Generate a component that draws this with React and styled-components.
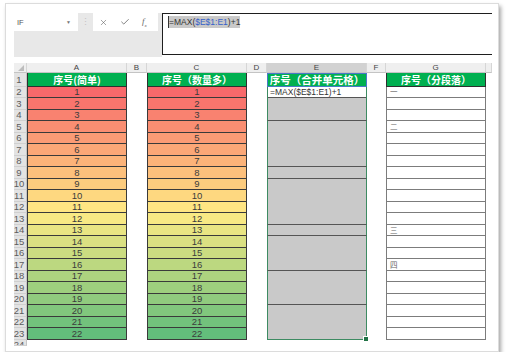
import React from "react";
import styled, { createGlobalStyle } from "styled-components";
import { X, Check } from "lucide-react";

const GlobalStyle = createGlobalStyle`
  body {
    margin: 0;
    background: #fff;
    font-family: "Liberation Sans", Arial, sans-serif;
  }
`;

const CJK = `"Noto Sans CJK SC", "Noto Sans", sans-serif`;

const Card = styled.div`
  box-sizing: border-box;
  width: 494px;
  height: 349px;
  margin: 3px 0 0 5px;
  background: #fff;
  border: 1px solid #dcdcdc;
  box-shadow: 2px 3px 4px rgba(0, 0, 0, 0.35);
  padding: 9px 0 0 8px;
  display: flex;
  flex-direction: column;
  gap: 6px;
  overflow: hidden;
`;

const Toolbar = styled.div`
  display: flex;
  align-items: flex-start;
  height: 44px;
`;

const ToolPanel = styled.div`
  width: 148px;
  height: 44px;
  background: #e8e8e8;
  display: flex;
  align-items: flex-start;
`;

const NameBox = styled.div`
  box-sizing: border-box;
  width: 64px;
  height: 18px;
  background: #fff;
  display: flex;
  align-items: center;
  padding: 0 7px 0 3px;
  font-size: 7.5px;
  color: #555;
  span:last-child {
    margin-left: auto;
    font-size: 5px;
    color: #777;
  }
`;

const Dots = styled.div`
  width: 15px;
  height: 18px;
  display: flex;
  align-items: center;
  justify-content: center;
  color: #c4c4c4;
  font-size: 9px;
`;

const FnBox = styled.div`
  box-sizing: border-box;
  width: 65px;
  height: 18px;
  background: #fff;
  display: flex;
  align-items: center;
  gap: 12px;
  padding-left: 6px;
  color: #555;
`;

const Fx = styled.span`
  font-family: "Liberation Serif", serif;
  font-style: italic;
  font-size: 9px;
  color: #666;
  sub {
    font-size: 5px;
  }
`;

const FormulaBox = styled.div`
  box-sizing: border-box;
  width: 330px;
  height: 42px;
  border: 1.5px solid #1e1e1e;
  border-right: none;
  padding: 3px 5px;
  font-size: 8.5px;
  color: #333;
`;

const Selected = styled.span`
  background: #c9c9c9;
  padding: 1px 0;
  border-left: 1px solid #333;
`;

const Ref = styled.span`
  color: #3560c8;
`;

const Sheet = styled.div`
  display: grid;
  grid-template-columns: 13px 100px 20px 100px 20px 100px 19px 100px 6px;
  grid-template-rows: 10px 13.5px repeat(22, 11.5px) 6px;
`;

const Corner = styled.div`
  background: #efefef;
  border-right: 1px solid #d6d6d6;
  border-bottom: 1px solid #c4c4c4;
  display: flex;
  align-items: flex-end;
  justify-content: flex-end;
  padding: 0 2px 1px 0;
`;

const ColHead = styled.div`
  box-sizing: border-box;
  background: ${(p) => (p.$active ? "#d2d2d2" : "#efefef")};
  color: #444;
  font-size: 8px;
  display: flex;
  align-items: center;
  justify-content: center;
  border-right: 1px solid #d6d6d6;
  border-bottom: 1px solid #c4c4c4;
`;

const RowHead = styled.div`
  box-sizing: border-box;
  background: #e3e3e3;
  color: #5c5c5c;
  font-size: 9.5px;
  display: flex;
  align-items: ${(p) => (p.$clip ? "flex-start" : "center")};
  justify-content: center;
  padding-right: 2px;
  border-right: 1px solid #c4c4c4;
  border-bottom: 1px solid #d0d0d0;
  overflow: hidden;
  line-height: 1;
`;

const Empty = styled.div``;

const Title = styled.div`
  box-sizing: border-box;
  background: #00b050;
  color: #fff;
  font-family: ${CJK};
  font-weight: bold;
  font-size: 10px;
  display: flex;
  align-items: center;
  justify-content: center;
  white-space: nowrap;
  border: 1px solid #2f2f2f;
  border-top: none;
`;

const RangeTitle = styled(Title)`
  border: 1.5px solid #4a78c8;
  font-size: 10.5px;
`;

const ScaleCell = styled.div`
  box-sizing: border-box;
  color: #3c3c3c;
  font-size: 9.5px;
  line-height: 1;
  display: flex;
  align-items: center;
  justify-content: center;
  border: 1px solid #3a3a3a;
  border-top: none;
`;

const Merged = styled.div`
  position: relative;
  box-sizing: border-box;
  grid-row: span ${(p) => p.$span};
  background: #c9c9c9;
  border-left: 1.5px solid #3d8b62;
  border-right: 1.5px solid #3d8b62;
  border-bottom: 1.5px solid ${(p) => (p.$last ? "#3d8b62" : "#555")};
  display: flex;
  flex-direction: column;
`;

const EditBox = styled.div`
  box-sizing: border-box;
  height: 11.5px;
  background: #fff;
  border-bottom: 1px solid #555;
  font-size: 8.5px;
  color: #333;
  padding-left: 2px;
  display: flex;
  align-items: center;
  white-space: nowrap;
`;

const Handle = styled.div`
  position: absolute;
  right: -3px;
  bottom: -3px;
  width: 4px;
  height: 4px;
  background: #217346;
  border: 1px solid #fff;
`;

const GCell = styled.div`
  box-sizing: border-box;
  border: 1px solid #7c7c7c;
  border-top: none;
  font-family: ${CJK};
  font-size: 7.5px;
  color: #666;
  padding-left: 3px;
  display: flex;
  align-items: center;
`;

const RED = [248, 105, 107];
const YELLOW = [255, 235, 132];
const GREEN = [99, 190, 123];

const mix = (a, b, t) => a.map((c, i) => Math.round(c + (b[i] - c) * t));

const scaleColor = (v) => {
  const t = (v - 1) / 21;
  const c = t < 0.5 ? mix(RED, YELLOW, t * 2) : mix(YELLOW, GREEN, (t - 0.5) * 2);
  return `rgb(${c.join(",")})`;
};

const MERGES = [
  [2, 4],
  [5, 8],
  [9, 9],
  [10, 13],
  [14, 14],
  [15, 17],
  [18, 20],
  [21, 23],
];

const G_TEXT = { 2: "一", 5: "二", 14: "三", 17: "四" };

const LETTERS = ["A", "B", "C", "D", "E", "F", "G"];

function renderRow(r) {
  const cells = [];
  cells.push(
    <RowHead key={`h${r}`} $clip={r === 24}>
      {r}
    </RowHead>
  );
  if (r === 24) {
    for (let i = 0; i < 8; i++) cells.push(<Empty key={`e${r}-${i}`} />);
    return cells;
  }
  const scale = (k) =>
    r === 1 ? null : (
      <ScaleCell key={k} style={{ background: scaleColor(r - 1) }}>
        {r - 1}
      </ScaleCell>
    );

  cells.push(r === 1 ? <Title key="a">序号(简单)</Title> : scale(`a${r}`));
  cells.push(<Empty key={`b${r}`} />);
  cells.push(r === 1 ? <Title key="c">序号（数量多）</Title> : scale(`c${r}`));
  cells.push(<Empty key={`d${r}`} />);

  if (r === 1) {
    cells.push(<RangeTitle key="e">序号（合并单元格）</RangeTitle>);
  } else {
    const m = MERGES.find(([s]) => s === r);
    if (m) {
      const last = m[1] === 23;
      cells.push(
        <Merged key={`e${r}`} $span={m[1] - m[0] + 1} $last={last}>
          {r === 2 && <EditBox>=MAX($E$1:E1)+1</EditBox>}
          {last && <Handle />}
        </Merged>
      );
    }
  }

  cells.push(<Empty key={`f${r}`} />);
  cells.push(
    r === 1 ? (
      <Title key="g">序号（分段落）</Title>
    ) : (
      <GCell key={`g${r}`}>{G_TEXT[r]}</GCell>
    )
  );
  cells.push(<Empty key={`z${r}`} />);
  return cells;
}

export default function App() {
  return (
    <>
      <GlobalStyle />
      <Card>
        <Toolbar>
          <ToolPanel>
            <NameBox>
              <span>IF</span>
              <span>▼</span>
            </NameBox>
            <Dots>⋮</Dots>
            <FnBox>
              <X size={9} strokeWidth={1.4} />
              <Check size={10} strokeWidth={1.8} />
              <Fx>
                f<sub>x</sub>
              </Fx>
            </FnBox>
          </ToolPanel>
          <FormulaBox>
            <Selected>
              =MAX(<Ref>$E$1:E1</Ref>)+1
            </Selected>
          </FormulaBox>
        </Toolbar>
        <Sheet>
          <Corner>
            <svg width="6" height="6" viewBox="0 0 6 6">
              <polygon points="6,0 6,6 0,6" fill="#bdbdbd" />
            </svg>
          </Corner>
          {LETTERS.map((l) => (
            <ColHead key={l} $active={l === "E"}>
              {l}
            </ColHead>
          ))}
          <ColHead />
          {Array.from({ length: 24 }, (_, i) => renderRow(i + 1))}
        </Sheet>
      </Card>
    </>
  );
}
